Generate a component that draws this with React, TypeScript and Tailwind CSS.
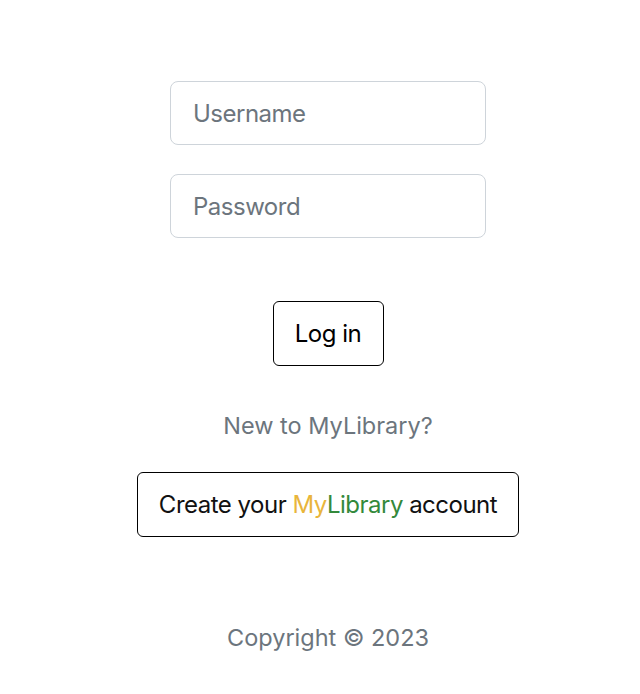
export default function App() {
  return (
    <div className="min-h-[694px] w-full bg-white pl-[16px] flex flex-col items-center font-['Inter','Liberation_Sans',sans-serif]">
      <form className="mt-[81px] flex flex-col items-center" onSubmit={(e) => e.preventDefault()}>
        <input
          type="text"
          placeholder="Username"
          className="w-[316px] h-[64px] px-[22px] border border-[#ced4da] rounded-[8px] text-[24px] tracking-[-0.5px] text-[#212529] placeholder:text-[#6c757d] outline-none"
        />
        <input
          type="password"
          placeholder="Password"
          className="mt-[29px] w-[316px] h-[64px] px-[22px] border border-[#ced4da] rounded-[8px] text-[24px] tracking-[-0.5px] text-[#212529] placeholder:text-[#6c757d] outline-none"
        />
        <button
          type="submit"
          className="mt-[63px] w-[111px] h-[65px] border border-black rounded-[6px] text-[24px] tracking-[-0.5px] text-black bg-white"
        >
          Log in
        </button>
      </form>

      <p className="mt-[45px] text-[23.5px] leading-[30px] text-[#6c757d]">New to MyLibrary?</p>

      <button className="mt-[31px] w-[382px] h-[65px] border border-black rounded-[6px] text-[24px] tracking-[-0.5px] text-[#111] bg-white">
        Create your <span className="text-[#e9b53b]">My</span>
        <span className="text-[#33893b]">Library</span> account
      </button>

      <p className="mt-[86px] text-[23.5px] leading-[30px] text-[#6c757d]">Copyright © 2023</p>
    </div>
  );
}
